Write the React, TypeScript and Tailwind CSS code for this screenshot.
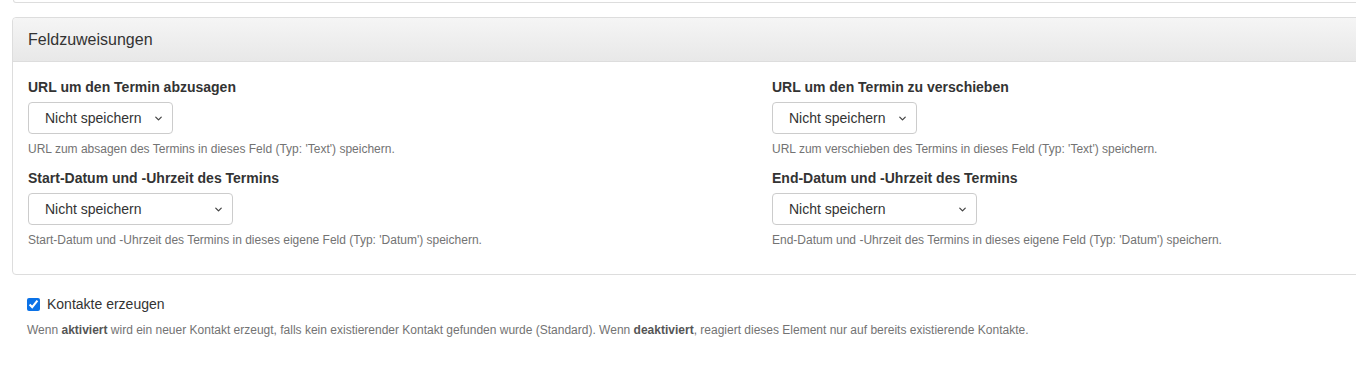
import { ChevronDown } from "lucide-react";

const FIELDS = [
  {
    key: "cancel",
    label: "URL um den Termin abzusagen",
    help: "URL zum absagen des Termins in dieses Feld (Typ: 'Text') speichern.",
    width: "w-[145px]",
  },
  {
    key: "reschedule",
    label: "URL um den Termin zu verschieben",
    help: "URL zum verschieben des Termins in dieses Feld (Typ: 'Text') speichern.",
    width: "w-[145px]",
  },
  {
    key: "start",
    label: "Start-Datum und -Uhrzeit des Termins",
    help: "Start-Datum und -Uhrzeit des Termins in dieses eigene Feld (Typ: 'Datum') speichern.",
    width: "w-[205px]",
  },
  {
    key: "end",
    label: "End-Datum und -Uhrzeit des Termins",
    help: "End-Datum und -Uhrzeit des Termins in dieses eigene Feld (Typ: 'Datum') speichern.",
    width: "w-[205px]",
  },
];

function FieldSelect({ width }: { width: string }) {
  return (
    <div className={`relative ${width} h-[32px]`}>
      <select
        defaultValue="none"
        className="w-full h-full appearance-none rounded-[4px] border border-[#cccccc] bg-white pl-[16px] pr-[20px] pt-[1px] text-[14px] text-[#333333] outline-none"
      >
        <option value="none">Nicht speichern</option>
      </select>
      <ChevronDown
        className="pointer-events-none absolute right-[9px] top-[11px] w-[11px] h-[11px] text-[#444444]"
        strokeWidth={2.75}
      />
    </div>
  );
}

export default function App() {
  return (
    <div
      className="w-[1356px] h-[366px] overflow-hidden bg-white text-[#333333]"
      style={{ fontFamily: '"Liberation Sans", Arial, sans-serif' }}
    >
      {/* bottom edge of the panel above */}
      <div className="ml-[13px] w-[1500px] h-[3px] border-x border-b border-[#dddddd] rounded-b-[4px]" />

      {/* Feldzuweisungen panel */}
      <div className="ml-[12px] mt-[14px] w-[1540px] rounded-[4px] border border-[#dddddd]">
        <div className="h-[44px] flex items-center px-[15px] border-b border-[#dddddd] rounded-t-[4px] bg-gradient-to-b from-[#f5f5f5] to-[#e8e8e8] text-[16px] text-[#333333]">
          Feldzuweisungen
        </div>
        <div className="grid grid-cols-[744px_744px] gap-y-[10px] px-[15px] pt-[15px] pb-[25px]">
          {FIELDS.map((f) => (
            <div key={f.key} className="flex flex-col">
              <label className="text-[14px] leading-[20px] font-bold text-[#333333] mb-[5px]">
                {f.label}
              </label>
              <FieldSelect width={f.width} />
              <p className="mt-[7px] text-[12px] leading-[17px] text-[#737373]">
                {f.help}
              </p>
            </div>
          ))}
        </div>
      </div>

      {/* Kontakte erzeugen */}
      <div className="ml-[27px] mt-[19px]">
        <label className="flex items-center gap-[7px] text-[14px] leading-[20px] text-[#333333]">
          <input type="checkbox" defaultChecked className="w-[13px] h-[13px] m-0 accent-[#0b72e7]" />
          Kontakte erzeugen
        </label>
        <p className="mt-[8px] text-[12px] leading-[17px] text-[#737373]">
          Wenn <strong className="font-bold text-[#555555]">aktiviert</strong> wird ein neuer Kontakt erzeugt, falls kein existierender Kontakt gefunden wurde (Standard). Wenn{" "}
          <strong className="font-bold text-[#555555]">deaktiviert</strong>, reagiert dieses Element nur auf bereits existierende Kontakte.
        </p>
      </div>
    </div>
  );
}
